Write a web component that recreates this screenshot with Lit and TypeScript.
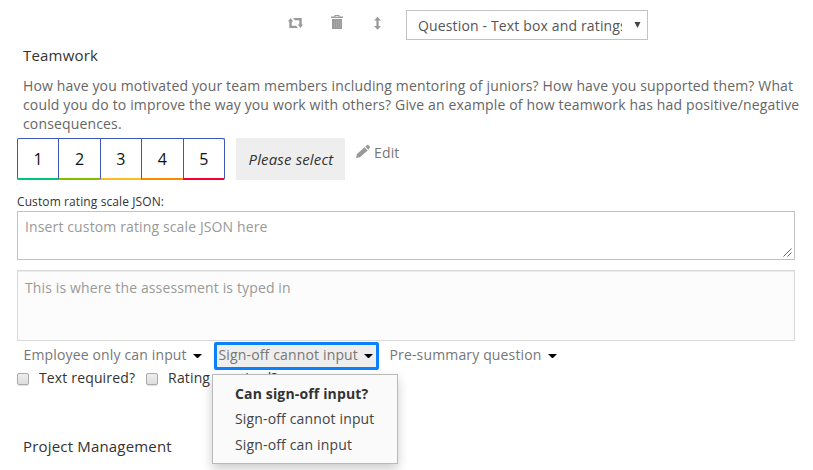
import { LitElement, html, css } from "lit";
import { customElement } from "lit/decorators.js";

@customElement("app-root")
export class AppRoot extends LitElement {
  static styles = css`
    :host {
      display: block;
      box-sizing: border-box;
      width: 813px;
      height: 470px;
      overflow: hidden;
      background: #fff;
      color: #333;
      font: 14px/19px "Open Sans", "Noto Sans", sans-serif;
      letter-spacing: 0.15px;
    }
    * { box-sizing: border-box; }
    svg { display: block; flex: none; }
    .page { display: flex; flex-direction: column; padding: 10px 18px 0 17px; }
    .toolbar { display: flex; height: 30px; padding-left: 271px; }
    .tool { margin-top: 4px; }
    .trash { margin-left: 28px; }
    .move { margin-left: 31px; }
    .select {
      display: flex; align-items: center; justify-content: space-between;
      width: 242px; height: 30px; margin-left: 25px; padding: 1px 6px 0 11px;
      border: 1px solid #c3c3c3; color: #555;
    }
    .value { width: 204px; overflow: hidden; white-space: nowrap; }
    .arrow { margin-top: -2px; }
    h2 { margin: 0; padding-left: 6px; font-size: 15px; line-height: 20px; font-weight: 400; letter-spacing: 0.18px; }
    .first { margin-top: 5px; }
    .desc { margin: 11px 0 0; padding-left: 6px; color: #666; white-space: nowrap; height: 57px; }
    .rating { display: flex; margin-top: 5px; height: 42px; }
    .scale { display: flex; width: 208px; height: 42px; border: 1px solid #3f57b8; border-bottom: 0; border-radius: 2px; }
    .cell {
      flex: 1; text-align: center; font-size: 16px; line-height: 40px; color: #111;
      border-bottom: 2px solid; border-left: 1px solid #3f57b8;
    }
    .cell:first-child { border-left: 0; }
    .c1 { border-bottom-color: #00c67c; }
    .c2 { border-bottom-color: #86bf00; }
    .c3 { border-bottom-color: #fdbb26; }
    .c4 { border-bottom-color: #fb8c00; }
    .c5 { border-bottom-color: #f50038; }
    .please {
      width: 109px; margin-left: 11px; background: #eee; text-align: center;
      font-size: 15px; font-style: italic; line-height: 43px; color: #333; padding-left: 1px;
    }
    .edit { display: flex; margin-left: 11px; padding-top: 5px; color: #777; gap: 4px; }
    .label { margin-top: 13px; height: 18px; font-size: 12px; line-height: 18px; letter-spacing: 0.1px; }
    .area { position: relative; height: 49px; padding: 5px 7px; border: 1px solid #c3c3c3; color: #999; width: 778px; letter-spacing: 0.13px; }
    .grip { position: absolute; right: 2px; bottom: 2px; }
    .disabled { height: 71px; margin-top: 10px; padding-top: 7px; border-color: #d9d9d9; background: #fcfcfc; box-shadow: inset 0 1px 1px rgba(0, 0, 0, 0.075); }
    .links { display: flex; height: 28px; margin-top: 1px; color: #777; white-space: nowrap; }
    .link { display: flex; align-items: center; gap: 6px; height: 24px; padding-left: 6.5px; }
    .l1 { width: 197px; }
    .l2 {
      position: relative; width: 165px; height: 28px; padding: 0 0 4px 1.5px; border: 3px solid #0a80fb;
      border-radius: 2px; background: #eee;
    }
    .l3 { padding-left: 10.5px; }
    .caret { width: 9px; height: 4px; margin-top: 4px; fill: #000; }
    .menu {
      position: absolute; z-index: 1; left: -5px; top: 29px; width: 186px; height: 90px;
      padding: 6px 0 0 22px; background: #fafafa; border: 1px solid #b9b9b9;
      box-shadow: 0 5px 10px rgba(0, 0, 0, 0.2); color: #444; line-height: 26px;
    }
    .head { font-weight: 700; color: #333; line-height: 25px; }
    .checks { display: flex; height: 20px; margin-top: -3px; white-space: nowrap; }
    .check { display: flex; align-items: center; }
    .box {
      width: 12px; height: 12px; margin: 4px 10px 0 0; border: 1px solid #aaa; border-radius: 2px;
      background: linear-gradient(#eee, #ddd); box-shadow: 0 1px 1px rgba(0, 0, 0, 0.12);
    }
    .check + .check { margin-left: 11px; }
    .last { margin-top: 49px; }
  `;

  private caret() {
    return html`<svg class="caret" viewBox="0 0 9 4"><path d="M0 0h9L5 4H4z" /></svg>`;
  }

  render() {
    return html`
      <div class="page">
        <div class="toolbar">
          <svg class="tool" width="15" height="18" viewBox="0 0 15 18" fill="#999">
            <path d="M2.500 4 5.200 7.500H3.700v4.300H8l2 2.200H1.300V7.500H0zM5 4h8.700v6.500H15L12.500 14 9.800 10.500h1.500V6.200H7z" />
          </svg>
          <svg class="tool trash" width="12" height="18" viewBox="0 0 12 18" fill="#999">
            <path d="M3.500 1h5v1.500H12V4H0V2.500h3.500zM4.500 2v.7h3V2zM1 5h10v10H1z" />
            <path d="M3.500 6v8M5.500 6v8M7.500 6v8M9.300 6v8" stroke="#b0b0b0" stroke-width=".6" />
          </svg>
          <svg class="tool move" width="7" height="18" viewBox="0 0 7 18" fill="#999">
            <path d="M3.500 2.700 6.900 6.400H4.600v5.600h2.300l-3.400 3.700L.1 12h2.300V6.400H.1z" />
          </svg>
          <div class="select">
            <span class="value">Question - Text box and ratings</span>
            <svg class="arrow" width="7" height="6" viewBox="0 0 7 6"><path d="M.5 0h6l-3 6z" fill="#444" /></svg>
          </div>
        </div>

        <h2 class="first">Teamwork</h2>
        <p class="desc">
          How have you motivated your team members including mentoring of juniors? How have you supported them? What<br />
          could you do to improve the way you work with others? Give an example of how teamwork has had positive/negative<br />
          consequences.
        </p>

        <div class="rating">
          <div class="scale">
            ${[1, 2, 3, 4, 5].map((n) => html`<div class="cell c${n}">${n}</div>`)}
          </div>
          <div class="please">Please select</div>
          <div class="edit">
            <svg width="14" height="17" viewBox="0 0 14 17" fill="#999">
              <path d="M0 15 1 11.100 8.600 4.200l3 3.200L4 14.300zM9.300 3.600l1.700-1.500q.8-.6 1.500 0l1.200 1.400q.6.800 0 1.500L12.300 6.800z" />
            </svg>
            <span>Edit</span>
          </div>
        </div>

        <div class="label">Custom rating scale JSON:</div>
        <div class="area">
          Insert custom rating scale JSON here
          <svg class="grip" width="9" height="9" viewBox="0 0 9 9" stroke="#555" stroke-width=".9">
            <path d="M.5 8.500l8-8M4.500 8.500l4-4" />
          </svg>
        </div>
        <div class="area disabled">This is where the assessment is typed in</div>

        <div class="links">
          <div class="link l1"><span>Employee only can input</span>${this.caret()}</div>
          <div class="link l2">
            <span>Sign-off cannot input</span>${this.caret()}
            <div class="menu">
              <div class="head">Can sign-off input?</div>
              <div>Sign-off cannot input</div>
              <div>Sign-off can input</div>
            </div>
          </div>
          <div class="link l3"><span>Pre-summary question</span>${this.caret()}</div>
        </div>

        <div class="checks">
          <div class="check"><span class="box"></span>Text required?</div>
          <div class="check"><span class="box"></span>Rating required?</div>
        </div>

        <h2 class="last">Project Management</h2>
      </div>
    `;
  }
}
